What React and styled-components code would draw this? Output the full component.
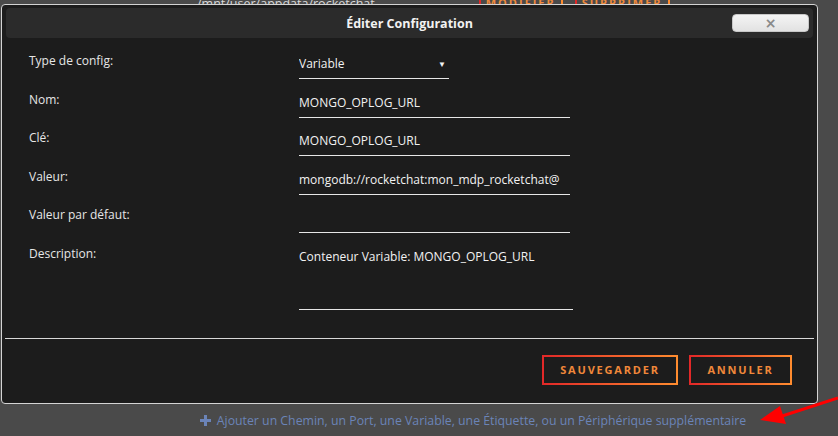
import React from 'react';
import styled, { createGlobalStyle } from 'styled-components';

const GlobalStyle = createGlobalStyle`
  html, body {
    margin: 0;
    padding: 0;
    background: #4a4a4a;
  }
  * {
    box-sizing: border-box;
  }
`;

const Page = styled.div`
  position: relative;
  width: 838px;
  height: 436px;
  overflow: hidden;
  background: #4a4a4a;
  font-family: "Open Sans", "Noto Sans", sans-serif;
  display: flex;
  flex-direction: column;
`;

const TopStrip = styled.div`
  height: 4px;
  overflow: hidden;
  display: flex;
  align-items: flex-end;
  padding-left: 197px;
  gap: 104px;
`;

const PathText = styled.span`
  color: #d8d8d8;
  font-size: 12.5px;
  line-height: 13px;
  margin-bottom: -6px;
`;

const StripButtons = styled.div`
  display: flex;
  gap: 12px;
  margin-bottom: -6px;
`;

const StripButton = styled.span`
  color: #f08a3c;
  font-size: 11px;
  font-weight: 700;
  letter-spacing: 2px;
  line-height: 14px;
  padding: 0 5px;
  border-left: 2px solid #e22828;
  border-right: 2px solid #ff8c2f;
`;

const Dialog = styled.div`
  margin-left: 1px;
  width: 817px;
  height: 400px;
  border: 1px solid #d4d4d4;
  border-radius: 4px;
  background: #1c1c1c;
  padding: 3px;
  display: flex;
  flex-direction: column;
`;

const TitleBar = styled.div`
  height: 30px;
  margin: 0 1px;
  background: #2b2b2b;
  border-radius: 4px;
  display: grid;
  grid-template-columns: 1fr auto 1fr;
  align-items: center;
`;

const Title = styled.div`
  grid-column: 2;
  color: #f2f2f2;
  font-size: 12.5px;
  font-weight: 700;
`;

const CloseButton = styled.button`
  grid-column: 3;
  justify-self: end;
  margin-right: 4px;
  width: 77px;
  height: 18px;
  padding: 0;
  border: 1px solid #c8c8c8;
  border-radius: 4px;
  background: linear-gradient(#f4f4f4, #e2e2e2);
  color: #8a8a8a;
  font-family: "DejaVu Sans", sans-serif;
  font-size: 14px;
  font-weight: 700;
  line-height: 14px;
  display: flex;
  align-items: center;
  justify-content: center;
`;

const Form = styled.div`
  display: grid;
  grid-template-columns: 270px 1fr;
  row-gap: 11.6px;
  padding: 14px 0 0 24px;
`;

const Label = styled.div`
  color: #e6e6e6;
  font-size: 12px;
  line-height: 18px;
`;

const Field = styled.div`
  width: ${p => p.$width}px;
  height: ${p => p.$height || 27}px;
  padding: 3px 0 5px 0;
  border-bottom: 1px solid #e6e6e6;
  color: #f2f2f2;
  font-size: 12px;
  line-height: 18px;
  white-space: nowrap;
  overflow: hidden;
  display: flex;
  justify-content: space-between;
  align-items: flex-start;
`;

const Caret = styled.span`
  font-size: 8px;
  line-height: 18px;
  margin-right: 3px;
  color: #f2f2f2;
`;

const Divider = styled.div`
  margin: 28px 0 0 0;
  height: 1px;
  background: #d8d8d8;
`;

const Footer = styled.div`
  display: flex;
  justify-content: flex-end;
  gap: 11px;
  padding: 16px 22px 0 0;
`;

const ActionButton = styled.button`
  width: ${p => p.$width}px;
  height: 30px;
  background: transparent;
  border: 2px solid;
  border-image: linear-gradient(90deg, #e22828, #ff8c2f) 1;
  color: #f0883a;
  font-family: "Open Sans", sans-serif;
  font-size: 11px;
  font-weight: 700;
  letter-spacing: 1.8px;
  padding: 0;
`;

const AddRow = styled.div`
  flex: 1;
  display: flex;
  align-items: center;
  justify-content: center;
  gap: 6px;
  padding-left: 108px;
  color: #6b84b8;
  font-size: 12.3px;
`;

const Arrow = styled.svg`
  position: absolute;
  right: 0;
  top: 390px;
`;

const rows = [
  { label: 'Type de config:', value: 'Variable', width: 150, select: true },
  { label: 'Nom:', value: 'MONGO_OPLOG_URL', width: 271 },
  { label: 'Clé:', value: 'MONGO_OPLOG_URL', width: 271 },
  { label: 'Valeur:', value: 'mongodb://rocketchat:mon_mdp_rocketchat@', width: 271 },
  { label: 'Valeur par défaut:', value: '', width: 271 },
  { label: 'Description:', value: 'Conteneur Variable: MONGO_OPLOG_URL', width: 274, height: 65 },
];

export default function App() {
  return (
    <Page>
      <GlobalStyle />
      <TopStrip>
        <PathText>/mnt/user/appdata/rocketchat</PathText>
        <StripButtons>
          <StripButton>MODIFIER</StripButton>
          <StripButton>SUPPRIMER</StripButton>
        </StripButtons>
      </TopStrip>

      <Dialog>
        <TitleBar>
          <Title>Éditer Configuration</Title>
          <CloseButton>×</CloseButton>
        </TitleBar>

        <Form>
          {rows.map(row => (
            <React.Fragment key={row.label}>
              <Label>{row.label}</Label>
              <Field $width={row.width} $height={row.height}>
                <span>{row.value}</span>
                {row.select && <Caret>▼</Caret>}
              </Field>
            </React.Fragment>
          ))}
        </Form>

        <Divider />

        <Footer>
          <ActionButton $width={136}>SAUVEGARDER</ActionButton>
          <ActionButton $width={103}>ANNULER</ActionButton>
        </Footer>
      </Dialog>

      <AddRow>
        <svg width="11" height="11" viewBox="0 0 11 11">
          <path d="M4 0h3v4h4v3H7v4H4V7H0V4h4z" fill="#6b84b8" />
        </svg>
        <span>Ajouter un Chemin, un Port, une Variable, une Étiquette, ou un Périphérique supplémentaire</span>
      </AddRow>

      <Arrow width="80" height="36" viewBox="0 0 80 36">
        <line x1="80" y1="8" x2="18" y2="28" stroke="#ff0000" strokeWidth="3" />
        <polygon points="2,30 22,16 28,34" fill="#ff0000" />
      </Arrow>
    </Page>
  );
}
